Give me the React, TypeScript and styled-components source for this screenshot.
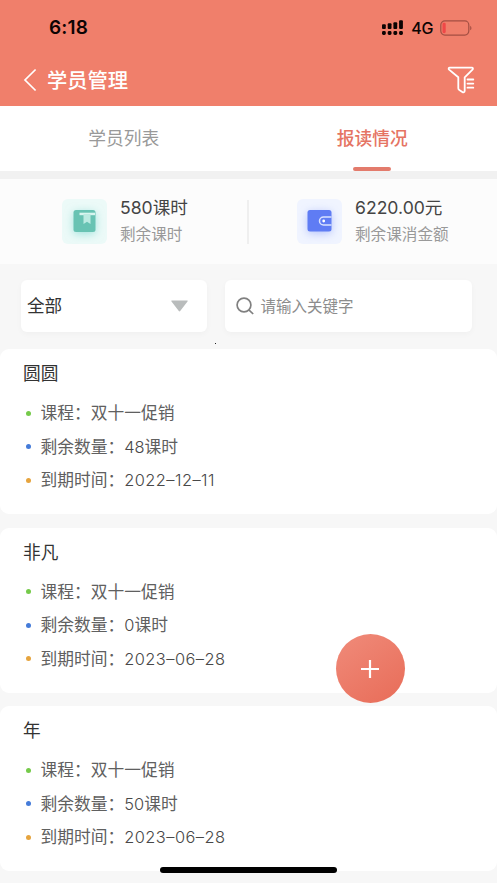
import React from 'react';
import styled, { createGlobalStyle } from 'styled-components';

const Global = createGlobalStyle`
  * { box-sizing: border-box; }
  body { margin: 0; background: #f7f7f7; overflow: hidden; }
`;

const Screen = styled.div`
  position: relative;
  width: 497px;
  height: 883px;
  overflow: hidden;
  background: #f7f7f7;
  font-family: "Inter", "Noto Sans CJK SC", sans-serif;
  color: #333;
`;

const Header = styled.header`
  height: 106px;
  background: #f07f6b;
`;

const StatusBar = styled.div`
  height: 54px;
  padding: 1px 25px 0 49px;
  display: flex;
  align-items: center;
  color: #0c0403;
`;

const Clock = styled.span`
  flex: 1;
  font-size: 19px;
  font-weight: 600;
  letter-spacing: 0.2px;
`;

const Network = styled.span`
  margin: 0 7px 0 8px;
  font-size: 16px;
  font-weight: 500;
  letter-spacing: -0.4px;
`;

const NavBar = styled.div`
  height: 52px;
  display: flex;
  align-items: center;
  padding: 0 22px 0 23px;
`;

const NavTitle = styled.h1`
  flex: 1;
  margin: 0 0 0 10px;
  padding-top: 2px;
  font-size: 20.3px;
  line-height: 30px;
  font-weight: 500;
  color: #fff;
`;

const Tabs = styled.nav`
  height: 65px;
  display: grid;
  grid-template-columns: 1fr 1fr;
  background: #fff;
`;

const Tab = styled.div<{ $active?: boolean }>`
  display: flex;
  flex-direction: column;
  align-items: center;
  justify-content: space-between;
  padding: 20px 1px 0 0;
  font-size: 17.75px;
  line-height: 26px;
  font-weight: ${(p) => (p.$active ? 500 : 400)};
  color: ${(p) => (p.$active ? '#e57463' : '#999')};
`;

const Underline = styled.span`
  width: 38px;
  height: 4px;
  border-radius: 2px;
  background: #e37b6c;
`;

const Stats = styled.section`
  height: 93px;
  border-top: 8px solid #f1f1f1;
  background: #fcfcfc;
  display: flex;
  align-items: center;
`;

const Stat = styled.div<{ $indent: number; $width: number }>`
  width: ${(p) => p.$width}px;
  padding-left: ${(p) => p.$indent}px;
  display: flex;
  align-items: center;
  white-space: nowrap;
`;

const StatIcon = styled.div<{ $bg: string; $glow: string }>`
  width: 45px;
  height: 45px;
  border-radius: 6px;
  display: flex;
  align-items: center;
  justify-content: center;
  background: ${(p) => p.$bg};

  svg {
    overflow: visible;
    filter: drop-shadow(0 2px 4px ${(p) => p.$glow});
  }
`;

const StatText = styled.div`
  margin: -2px 0 0 13px;
`;

const StatValue = styled.div`
  font-size: 17.6px;
  line-height: 27px;
  color: #444;
`;

const StatLabel = styled.div`
  font-size: 15.6px;
  line-height: 27px;
  font-weight: 400;
  color: #999;
`;

const Divider = styled.span`
  width: 2px;
  height: 44px;
  background: #efefef;
`;

const Filters = styled.section`
  height: 85px;
  padding: 16px 25px 0 21px;
  display: flex;
  gap: 18px;
`;

const Field = styled.div<{ $width: number }>`
  width: ${(p) => p.$width}px;
  height: 52px;
  border-radius: 6px;
  background: #fff;
  box-shadow: 0 2px 6px rgba(0, 0, 0, 0.03);
  display: flex;
  align-items: center;
`;

const SelectValue = styled.span`
  flex: 1;
  padding-left: 6px;
  font-size: 17.6px;
  line-height: 26px;
`;

const Caret = styled.svg`
  margin-right: 19px;
`;

const SearchIcon = styled.svg`
  margin: 0 7px 0 11px;
`;

const Placeholder = styled.span`
  padding-top: 1px;
  font-size: 15.5px;
  line-height: 24px;
  font-weight: 400;
  color: #8c8c8c;
`;

const List = styled.main`
  display: flex;
  flex-direction: column;
  gap: 13.5px;
`;

const Card = styled.article`
  height: 165px;
  flex: none;
  padding: 10px 23px 0;
  border-radius: 9px;
  background: #fff;
`;

const Name = styled.h2`
  margin: 0 0 7.4px;
  font-size: 17.7px;
  line-height: 30px;
  font-weight: 400;
  color: #333;
`;

const Row = styled.div`
  height: 33.6px;
  display: flex;
  align-items: center;
  font-size: 16.75px;
  line-height: 24px;
  font-weight: 400;
  color: #606060;
  white-space: nowrap;
`;

const Latin = styled.span<{ $spacing?: number }>`
  font-size: 16.4px;
  font-weight: 300;
  letter-spacing: ${(p) => p.$spacing ?? 0}px;
  color: #484848;
`;

const Dot = styled.span<{ $color: string }>`
  width: 5px;
  height: 5px;
  margin: 0 10px 0 2.5px;
  border-radius: 50%;
  background: ${(p) => p.$color};
`;

const AddButton = styled.button`
  position: absolute;
  left: 336px;
  top: 634px;
  width: 69px;
  height: 69px;
  padding: 0 1px 0 0;
  border: 0;
  border-radius: 50%;
  display: flex;
  align-items: center;
  justify-content: center;
  background: linear-gradient(145deg, #f08b7a, #e86c58);
`;

const HomeIndicator = styled.div`
  position: absolute;
  left: 160px;
  top: 867px;
  width: 177px;
  height: 6px;
  border-radius: 3px;
  background: #000;
`;

const Speck = styled.i`
  position: absolute;
  left: 215px;
  top: 343px;
  width: 1px;
  height: 1px;
  background: #222;
`;

const bars = [6, 7, 8, 10];

const students = [
  { name: '圆圆', left: '48', due: '2022–12–11' },
  { name: '非凡', left: '0', due: '2023–06–28' },
  { name: '年', left: '50', due: '2023–06–28' },
  { name: '', left: '', due: '' },
];

export default function App() {
  return (
    <Screen>
      <Global />
      <Header>
        <StatusBar>
          <Clock>6:18</Clock>
          <svg width="21" height="16" viewBox="0 0 21 16" fill="#0c0403">
            {bars.map((h, i) => (
              <g key={h}>
                <rect x={i * 5.7} y={10 - h + 0.2} width="3.8" height={h - 1.2} rx="1" />
                <rect x={i * 5.7} y="11" width="3.8" height="4" rx="1.4" />
              </g>
            ))}
          </svg>
          <Network>4G</Network>
          <svg width="32" height="16" viewBox="0 0 32 16" fill="none">
            <rect x="0.8" y="0.9" width="28" height="14.2" rx="4" stroke="#a44f43" strokeWidth="1.2" />
            <rect x="2.5" y="2.7" width="3.2" height="10.5" rx="1.4" fill="#f04848" />
            <path d="M30.2 5.7c1.7.8 1.7 3.8 0 4.6z" fill="#a44f43" />
          </svg>
        </StatusBar>
        <NavBar>
          <svg width="14" height="24" viewBox="0 0 14 24" fill="none" stroke="#fff" strokeWidth="1.7">
            <path d="M12.6 1.5 2 12l10.6 10.5" />
          </svg>
          <NavTitle>学员管理</NavTitle>
          <svg width="28" height="28" viewBox="0 0 28 28" fill="none" stroke="#fff" strokeWidth="1.8" strokeLinejoin="round" strokeLinecap="round">
            <path d="M2.8 1.7h22c1.2 0 1.5 1.1.7 1.9l-7.8 7.7v13.5c0 1.6-1.3 1.8-2.4 1.1l-3-1.9c-.7-.4-1-.9-1-1.7v-11L2.1 3.6c-.8-.8-.5-1.9.7-1.9z" />
            <path d="M20.5 13.5h5.8M20.5 17.6h5.8M20.5 21.7h5.8" />
          </svg>
        </NavBar>
      </Header>
      <Tabs>
        <Tab>学员列表</Tab>
        <Tab $active>
          报读情况
          <Underline />
        </Tab>
      </Tabs>
      <Stats>
        <Stat $indent={62} $width={247}>
          <StatIcon $bg="#ecfaf8" $glow="rgba(90, 205, 195, 0.5)">
            <svg width="23" height="23" viewBox="0 0 23 23">
              <rect x="0.5" y="0" width="22" height="22" rx="2.5" fill="#68c3b3" />
              <path d="M6.5 2.7H22v2.5H6.5z" fill="#d8f5ef" />
              <path d="M10.5 4h7v10l-3.5-2.3-3.5 2.3z" fill="#bdebe2" />
            </svg>
          </StatIcon>
          <StatText>
            <StatValue>580课时</StatValue>
            <StatLabel>剩余课时</StatLabel>
          </StatText>
        </Stat>
        <Divider />
        <Stat $indent={48} $width={248}>
          <StatIcon $bg="#f0f4ff" $glow="rgba(95, 124, 244, 0.4)">
            <svg width="25" height="23" viewBox="0 0 25 23">
              <rect x="0.5" y="0" width="24" height="21.5" rx="2.5" fill="#5f7cf4" />
              <path d="M24.5 7h-8a4 4 0 0 0 0 8h8" fill="none" stroke="#d9e2ff" strokeWidth="1.5" />
              <circle cx="16.7" cy="11" r="1.4" fill="#fff" />
            </svg>
          </StatIcon>
          <StatText>
            <StatValue>6220.00元</StatValue>
            <StatLabel>剩余课消金额</StatLabel>
          </StatText>
        </Stat>
      </Stats>
      <Filters>
        <Field $width={186}>
          <SelectValue>全部</SelectValue>
          <Caret width="17" height="12" viewBox="0 0 17 12">
            <path d="M1 .5h15c.7 0 .9.6.5 1L9.2 11c-.4.5-1 .5-1.4 0L.5 1.5C.1 1.1.3.5 1 .5z" fill="#b9bcbc" />
          </Caret>
        </Field>
        <Field $width={248}>
          <SearchIcon width="18" height="18" viewBox="0 0 18 18" fill="none" stroke="#808080" strokeWidth="1.7">
            <circle cx="8" cy="8" r="6.9" />
            <path d="m12.8 12.8 4.4 4.2" />
          </SearchIcon>
          <Placeholder>请输入关键字</Placeholder>
        </Field>
      </Filters>
      <List>
        {students.map((s, i) => (
          <Card key={i}>
            {s.name && (
              <>
                <Name>{s.name}</Name>
                <Row><Dot $color="#75ca4a" />课程：双十一促销</Row>
                <Row><Dot $color="#447bd9" />剩余数量：<Latin>{s.left}</Latin>课时</Row>
                <Row><Dot $color="#e6a43e" />到期时间：<Latin $spacing={0.45}>{s.due}</Latin></Row>
              </>
            )}
          </Card>
        ))}
      </List>
      <Speck />
      <AddButton aria-label="添加">
        <svg width="20" height="20" viewBox="0 0 20 20" stroke="#fff" strokeWidth="2.2">
          <path d="M10 1v18M1 10h18" />
        </svg>
      </AddButton>
      <HomeIndicator />
    </Screen>
  );
}
